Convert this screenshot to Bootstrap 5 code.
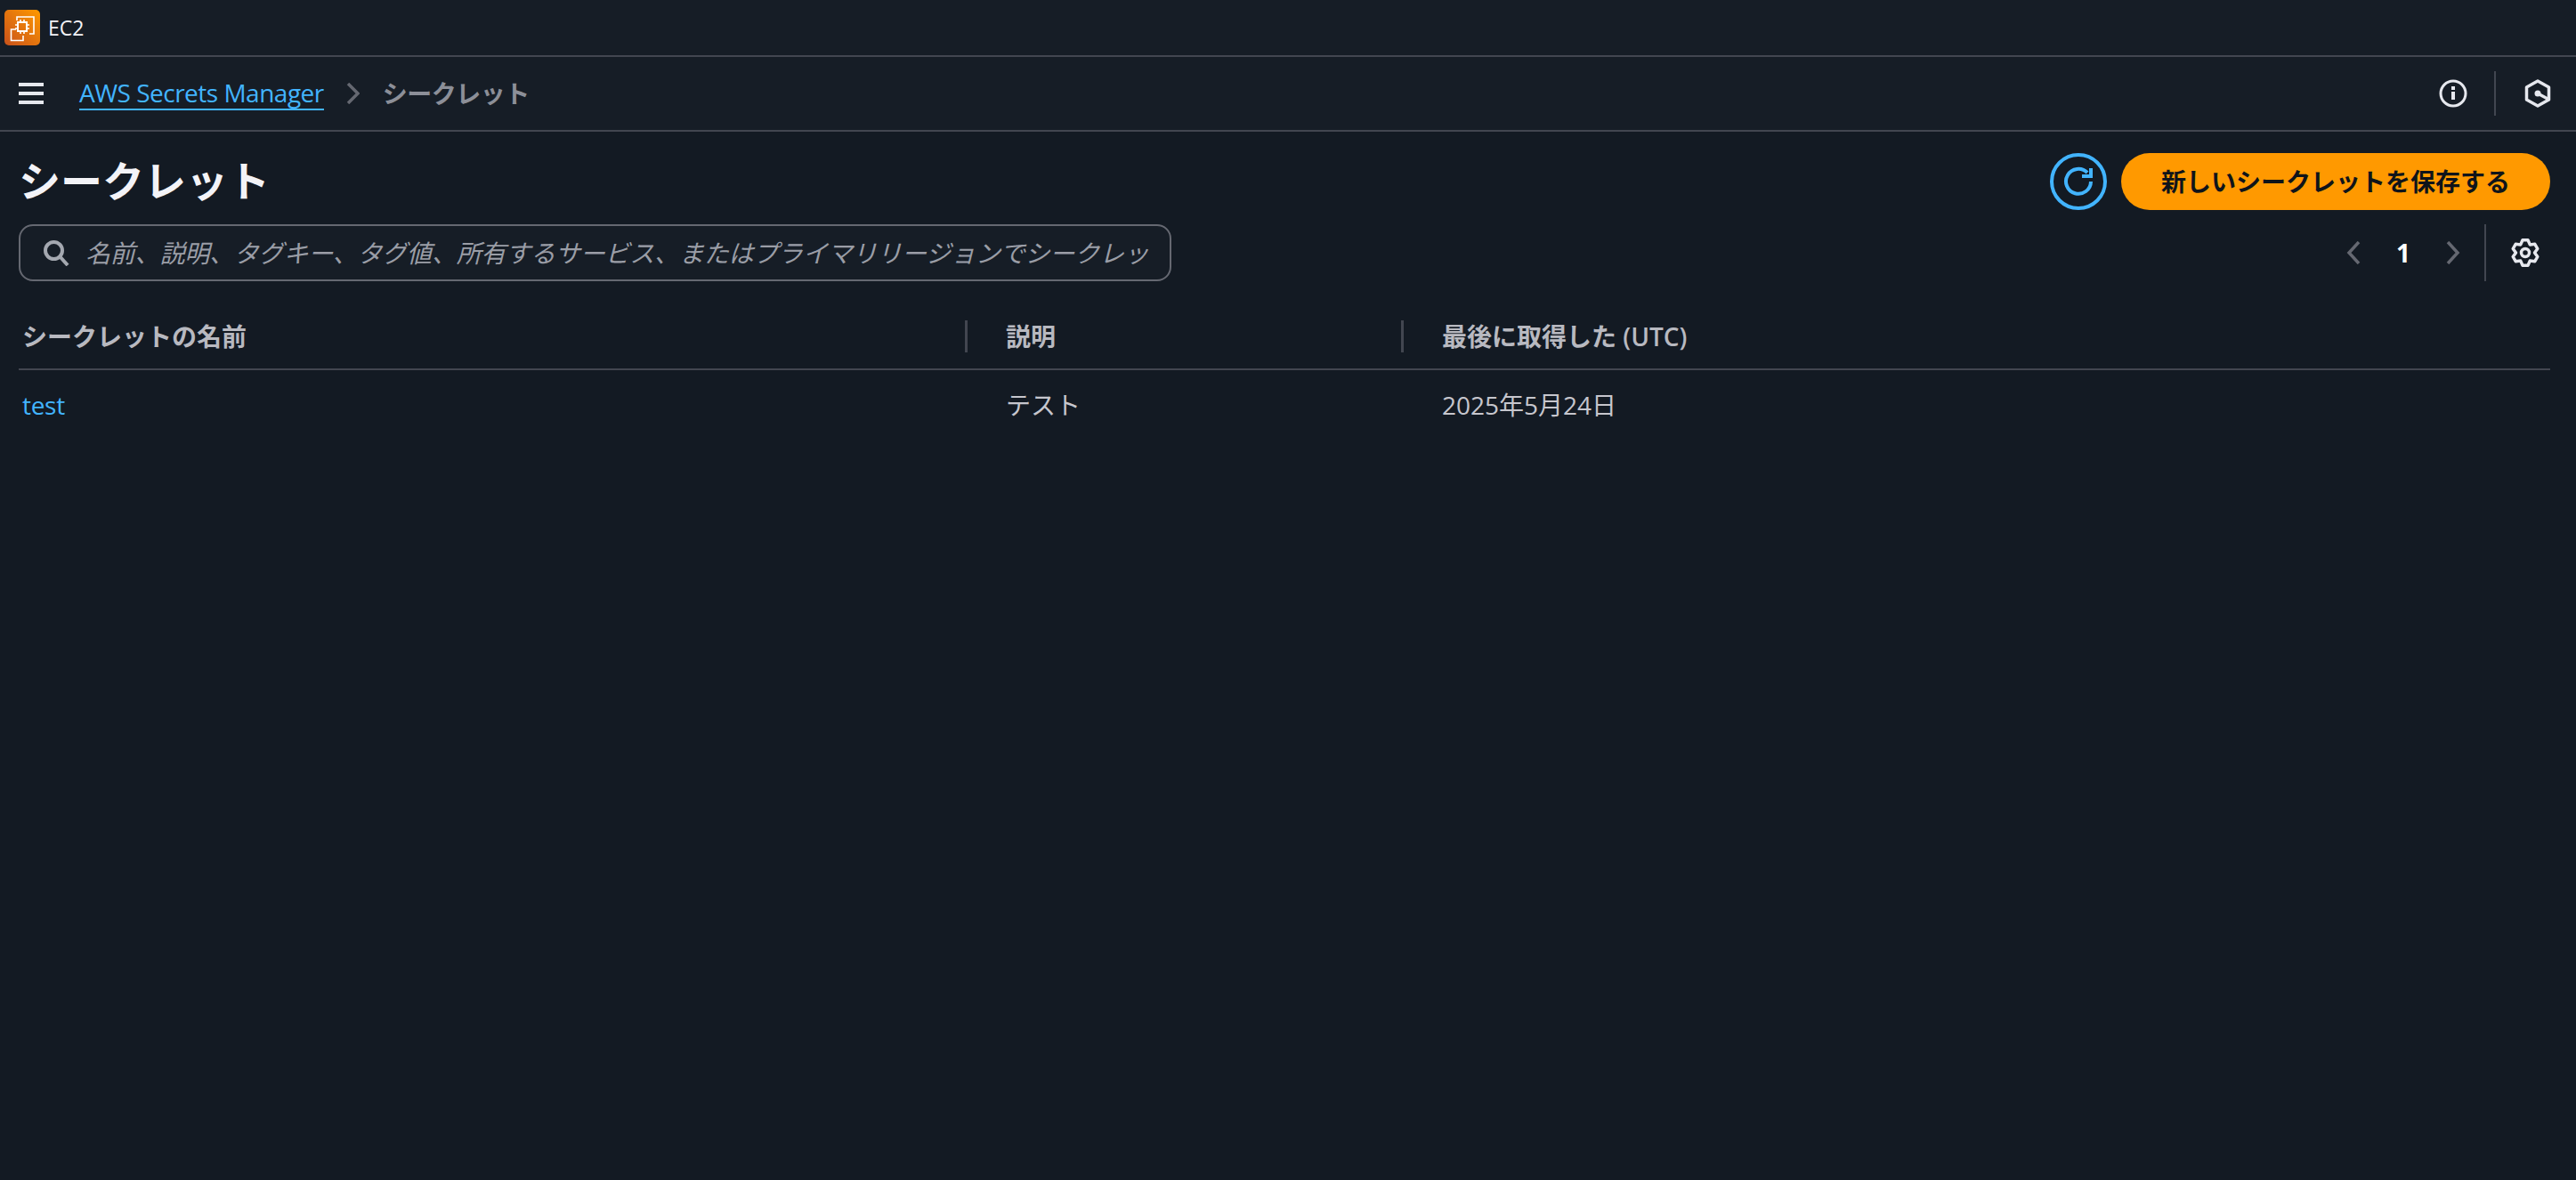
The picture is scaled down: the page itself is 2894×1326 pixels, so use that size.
<!doctype html>
<html lang="ja"><head><meta charset="utf-8">
<link href="https://cdn.jsdelivr.net/npm/bootstrap@5.3.0/dist/css/bootstrap.min.css" rel="stylesheet">
<style>
html,body{background:#131a23;color:#dee1e5;font-family:"Open Sans","Noto Sans CJK JP",sans-serif;margin:0;height:1326px;overflow:hidden}
.topbar{height:64px;background:#161d26;border-bottom:2px solid #424650;padding-left:5px;font-size:23px;color:#f3f3f7}
.logo{width:40px;height:40px;border-radius:5px;background:linear-gradient(45deg,#c8511b,#ff9900);margin-right:9px}
.crumbbar{height:84px;background:#161d26;border-bottom:2px solid #424650;padding:0 28px 0 21px;font-size:28px}
.crumbbar a{color:#42b4ff;border-bottom:2px solid #42b4ff;line-height:36px;letter-spacing:-.5px;margin-left:40px}
.crumbchev{margin:0 26px 0 25px}
.crumbnow{color:#8c8f98;font-weight:700;letter-spacing:-.5px}
.vsep{width:2px;height:50px;background:#424650}
.infogap{margin:0 30px}
.hexgap{margin-left:2px}
.title{font-size:47px;font-weight:700;color:#f3f3f7;line-height:60px;padding-bottom:2px}
.refresh{width:64px;height:64px;border-radius:50%;border:4px solid #42b4ff;background:transparent;padding:0}
.primarybtn{height:64px;width:482px;background:#ff9900;border:0;border-radius:32px;color:#0f141a;font-size:28px;font-weight:700;padding:0}
.searchbox{width:1295px;height:64px;border:2px solid #656871;border-radius:16px;background:#161d26;padding:0 0 0 25px}
.searchbox svg{margin-right:18px}
.searchtext{font-size:28px;font-style:italic;color:#9a9da6;white-space:nowrap;letter-spacing:-.2px}
.pager{height:64px}
.pagenum{font-size:28px;font-weight:700;color:#fff;margin:0 40px;width:16px;text-align:center}
.pagersep{width:2px;height:64px;background:#424650;margin:0 28px 0 27px}
.gearwrap{margin-right:12px}
.datatable{margin:20px 0 0 0;font-size:28px;line-height:36px;--bs-table-bg:transparent;--bs-table-color:#dee1e5;width:100%;table-layout:fixed}
.datatable th{font-weight:600;color:#b8b9c0;padding:24px 0 18px 42px;border-bottom:2px solid #424650;position:relative}
.datatable td{border:0;padding:21px 0 0 42px;color:#c6c6cd}
.datatable th:first-child,.datatable td:first-child{padding-left:4px}
.datatable th.colsep::after{content:"";position:absolute;right:1px;top:24px;height:36px;width:3px;background:#424650}
.datatable td a{color:#42b4ff;text-decoration:none;letter-spacing:-.3px}
.colwide{width:1067px}
.colmid{width:490px}
.mainarea{padding:24px 29px 0 21px}
</style></head><body>
<div class="topbar d-flex align-items-center">
<span class="logo d-flex align-items-center justify-content-center"><svg width="40" height="40" viewBox="0 0 40 40" fill="none" stroke="#fff" stroke-width="1.6"><path d="M14 12V8h19v19h-5"/><path d="M13 22H7.500v12.500H21V29"/><rect x="15" y="14" width="10" height="10" stroke-width="2"/><path d="M18 11v3M22 11v3M18 24v3M22 24v3M12 17h3M12 21h3M25 17h3M25 21h3"/></svg></span><span>EC2</span>
</div>
<div class="crumbbar d-flex align-items-center">
<svg width="28" height="24" viewBox="0 0 28 24" fill="#e6e8ee"><rect width="28" height="4"/><rect y="10" width="28" height="4"/><rect y="20" width="28" height="4"/></svg>
<a class="text-decoration-none" href="#">AWS Secrets Manager</a>
<svg class="crumbchev" width="15" height="24" viewBox="0 0 15 24" fill="none" stroke="#656871" stroke-width="3.500"><path d="M2 1l11 11L2 23"/></svg>
<span class="crumbnow">シークレット</span>
<span class="ms-auto d-flex align-items-center">
<svg width="32" height="32" viewBox="0 0 32 32" fill="none" stroke="#e6e8ee" stroke-width="3"><circle cx="16" cy="16" r="14"/><path d="M16 14v9M16 8v4" stroke-width="4"/></svg>
<span class="vsep infogap"></span>
<svg class="hexgap" width="30" height="32" viewBox="0 0 30 32" fill="none" stroke="#e6e8ee" stroke-width="3.500"><path d="M15 2l12.500 7v14L15 30 2.500 23V9z" stroke-linejoin="round"/><circle cx="15" cy="16" r="3.500" fill="#e6e8ee" stroke="none"/><path d="M15 16l12 6.500"/></svg>
</span></div>
<div class="mainarea">
<div class="d-flex align-items-center justify-content-between">
<h1 class="title m-0">シークレット</h1>
<div class="d-flex align-items-center gap-3">
<button class="refresh d-flex align-items-center justify-content-center"><svg width="34" height="34" viewBox="0 0 34 34" fill="none" stroke="#42b4ff" stroke-width="4"><path d="M27 7A14 14 0 1 0 31 17"/><path d="M31 2v9H21"/></svg></button>
<button class="primarybtn">新しいシークレットを保存する</button>
</div></div>
<div class="d-flex align-items-center justify-content-between mt-3">
<div class="searchbox d-flex align-items-center"><svg class="flex-shrink-0" width="30" height="30" viewBox="0 0 30 30" fill="none" stroke="#a4a8b0" stroke-width="4"><circle cx="12.500" cy="12.500" r="9.500"/><path d="M19 19l9 10"/></svg><span class="searchtext">名前、説明、タグキー、タグ値、所有するサービス、またはプライマリリージョンでシークレッ</span></div>
<div class="pager d-flex align-items-center">
<svg width="16" height="26" viewBox="0 0 16 26" fill="none" stroke="#656871" stroke-width="3.500"><path d="M14 1L3 13l11 12"/></svg>
<span class="pagenum">1</span>
<svg width="16" height="26" viewBox="0 0 16 26" fill="none" stroke="#656871" stroke-width="3.500"><path d="M2 1l11 12L2 25"/></svg>
<span class="pagersep"></span>
<svg class="gearwrap" width="32" height="34" viewBox="0 0 32 34" fill="none" stroke="#e6e8ee" stroke-width="3.500" stroke-linejoin="round"><circle cx="16" cy="17" r="4.500"/><path d="M13 2.800h6l2.250 5.100 5.550-.6 3 5.200-3.300 4.500 3.300 4.500-3 5.200-5.550-.6L19 31.200h-6l-2.250-5.100-5.550.6-3-5.200L5.500 17l-3.300-4.500 3-5.200 5.550.6z"/></svg>
</div></div>
<table class="table datatable"><colgroup><col class="colwide"><col class="colmid"><col></colgroup>
<thead><tr><th class="colsep">シークレットの名前</th><th class="colsep">説明</th><th>最後に取得した (UTC)</th></tr></thead>
<tbody><tr><td><a href="#">test</a></td><td>テスト</td><td>2025年5月24日</td></tr></tbody></table>
</div>
<script src="https://cdn.jsdelivr.net/npm/bootstrap@5.3.0/dist/js/bootstrap.bundle.min.js"></script>
</body></html>
